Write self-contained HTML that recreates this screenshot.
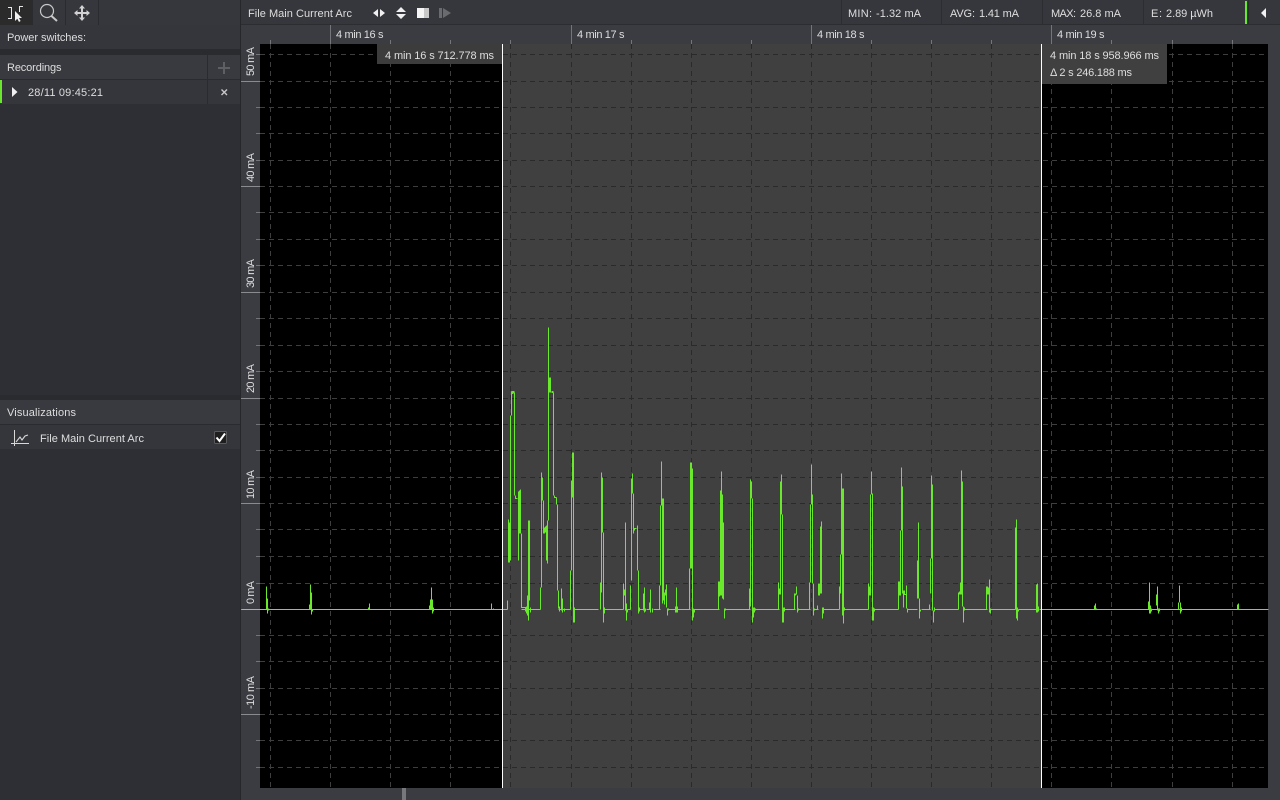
<!DOCTYPE html>
<html><head><meta charset="utf-8"><style>
html,body{margin:0;padding:0;background:#2e2f34;width:1280px;height:800px;overflow:hidden}
svg{display:block;position:absolute;left:0;top:0}
text{font-family:"Liberation Sans",sans-serif;font-size:11px;fill:#dedede}
</style></head><body>
<svg width="1280" height="800" viewBox="0 0 1280 800" xmlns="http://www.w3.org/2000/svg">
<defs>
<clipPath id="sel"><rect x="503" y="44" width="538" height="744"/></clipPath>
<clipPath id="l"><rect x="260" y="44" width="242" height="744"/></clipPath>
<clipPath id="r"><rect x="1042" y="44" width="226" height="744"/></clipPath>
<g id="grid" fill="none" stroke-dasharray="5 4" stroke-width="1" shape-rendering="crispEdges">
<path d="M270.5 44V788M330.5 44V788M390.5 44V788M450.5 44V788M510.5 44V788M571.5 44V788M631.5 44V788M691.5 44V788M751.5 44V788M811.5 44V788M871.5 44V788M931.5 44V788M991.5 44V788M1051.5 44V788M1111.5 44V788M1172.5 44V788M1232.5 44V788"/>
<path d="M260 54.5H1268M260 81.5H1268M260 107.5H1268M260 133.5H1268M260 160.5H1268M260 186.5H1268M260 212.5H1268M260 239.5H1268M260 265.5H1268M260 292.5H1268M260 318.5H1268M260 345.5H1268M260 371.5H1268M260 398.5H1268M260 424.5H1268M260 450.5H1268M260 477.5H1268M260 503.5H1268M260 529.5H1268M260 556.5H1268M260 583.5H1268M260 635.5H1268M260 661.5H1268M260 688.5H1268M260 714.5H1268M260 740.5H1268M260 767.5H1268"/>
</g>
</defs>

<!-- base panels -->
<rect x="0" y="0" width="1280" height="800" fill="#2e2f34"/>
<rect x="241" y="25" width="1039" height="775" fill="#3b3c42"/>
<rect x="240" y="0" width="1" height="800" fill="#26272a"/>

<!-- left toolbar -->
<rect x="0" y="0" width="240" height="25" fill="#36373c"/>
<rect x="0" y="0" width="32" height="25" fill="#2b2b2c"/>
<rect x="32" y="0" width="1" height="25" fill="#2a2b2e"/>
<rect x="65" y="0" width="1" height="25" fill="#2a2b2e"/>
<rect x="98" y="0" width="1" height="25" fill="#2a2b2e"/>
<path d="M8 7.5H11.5V18.5H8M23 6.5H19.5V12" fill="none" stroke="#e8e8e8" stroke-width="1"/>
<path d="M15 11V21L17.3 18.8L19 22L20.6 21L19 18H22Z" fill="#f0f0f0"/>
<circle cx="47" cy="11" r="6.5" fill="none" stroke="#c8c8c8" stroke-width="1.2"/>
<path d="M51.5 16L57 21" fill="none" stroke="#c8c8c8" stroke-width="2"/>
<path d="M82 5L85 8.5H83V12H86.5V10L90 13L86.5 16V14H83V17.5H85L82 21L79 17.5H81V14H77.5V16L74 13L77.5 10V12H81V8.5H79Z" fill="#d2d2d2"/>

<!-- power switches -->
<rect x="0" y="25" width="240" height="24" fill="#35363b"/>
<rect x="0" y="49" width="240" height="6" fill="#2a2b2e"/>
<text x="7" y="41" textLength="79" lengthAdjust="spacing">Power switches:</text>

<!-- recordings -->
<rect x="0" y="55" width="240" height="24" fill="#393a3f"/>
<rect x="0" y="79" width="240" height="1" fill="#2a2b2e"/>
<rect x="0" y="80" width="240" height="24" fill="#35363b"/>
<rect x="207" y="55" width="1" height="49" fill="#2a2b2e"/>
<rect x="0" y="80" width="2" height="23" fill="#6be62e"/>
<text x="7" y="71" textLength="54.5" lengthAdjust="spacing">Recordings</text>
<path d="M224 62V74M218 68H230" stroke="#5e5f63" stroke-width="2" fill="none"/>
<path d="M12 87L17.5 92L12 97Z" fill="#f0f0f0"/>
<text x="28" y="96" textLength="75" lengthAdjust="spacing">28/11 09:45:21</text>
<path d="M221.5 89.5L227 95M227 89.5L221.5 95" stroke="#c8c8c8" stroke-width="1.4" fill="none"/>

<!-- visualizations -->
<rect x="0" y="395" width="240" height="5" fill="#2a2b2e"/>
<rect x="0" y="400" width="240" height="24" fill="#393a3f"/>
<rect x="0" y="424" width="240" height="1" fill="#2a2b2e"/>
<rect x="0" y="425" width="240" height="24" fill="#35363b"/>
<text x="7" y="416" textLength="69" lengthAdjust="spacing">Visualizations</text>
<path d="M14.5 430V446M11 443.5H29" stroke="#d8d8d8" stroke-width="1" fill="none"/>
<path d="M16 442L20 437L22 440L25 436L28 435" stroke="#d8d8d8" stroke-width="1.1" fill="none"/>
<text x="40" y="442" textLength="104" lengthAdjust="spacing">File Main Current Arc</text>
<rect x="214.5" y="431.5" width="12" height="12" rx="1" fill="#1e1e1f" stroke="#5a5a5c"/>
<path d="M216.5 437.5L219.5 441L225 433.5" stroke="#fff" stroke-width="2" fill="none"/>

<!-- top bar -->
<rect x="241" y="0" width="1039" height="25" fill="#36373c"/>
<rect x="241" y="24" width="1039" height="1" fill="#2c2d30"/>
<text x="248" y="17" textLength="104" lengthAdjust="spacing">File Main Current Arc</text>
<path d="M378 9V17L373 13ZM380 9V17L385 13Z" fill="#f0f0f0"/>
<path d="M401 7L406 12H396ZM401 19L406 14H396Z" fill="#f0f0f0"/>
<rect x="417" y="8" width="7" height="10" fill="#f5f5f5"/><rect x="424" y="8" width="5" height="10" fill="#c8c8c8"/>
<rect x="439" y="8" width="3" height="10" fill="#6a6b6e"/><path d="M443 8L451 13L443 18Z" fill="#6a6b6e"/>

<rect x="841" y="0" width="1" height="25" fill="#2c2d30"/>
<rect x="941" y="0" width="1" height="25" fill="#2c2d30"/>
<rect x="1042" y="0" width="1" height="25" fill="#2c2d30"/>
<rect x="1143" y="0" width="1" height="25" fill="#2c2d30"/>
<rect x="1248" y="0" width="1" height="25" fill="#2c2d30"/>
<rect x="1245" y="1" width="2" height="23" fill="#6be62e"/>
<path d="M1266 8V18L1261 13Z" fill="#f0f0f0"/>
<text x="848" y="17" textLength="24" lengthAdjust="spacing">MIN:</text>
<text x="876" y="17" textLength="45" lengthAdjust="spacing">-1.32 mA</text>
<text x="950" y="17" textLength="25" lengthAdjust="spacing">AVG:</text>
<text x="979" y="17" textLength="40" lengthAdjust="spacing">1.41 mA</text>
<text x="1051" y="17" textLength="25" lengthAdjust="spacing">MAX:</text>
<text x="1080" y="17" textLength="41" lengthAdjust="spacing">26.8 mA</text>
<text x="1151" y="17" textLength="11" lengthAdjust="spacing">E:</text>
<text x="1166" y="17" textLength="47" lengthAdjust="spacing">2.89 µWh</text>

<!-- plot -->
<rect x="260" y="44" width="1008" height="744" fill="#000"/>
<rect x="503" y="44" width="538" height="744" fill="#404040"/>
<g stroke="#3e3e3e" clip-path="url(#l)"><use href="#grid"/></g>
<g stroke="#3e3e3e" clip-path="url(#r)"><use href="#grid"/></g>
<g stroke="#2a2a2a" clip-path="url(#sel)"><use href="#grid"/></g>

<!-- axis ticks -->
<path shape-rendering="crispEdges" stroke="#74757a" fill="none" d="M330.5 25V44M571.5 25V44M811.5 25V44M1051.5 25V44M270.5 40V44M390.5 40V44M450.5 40V44M510.5 40V44M631.5 40V44M691.5 40V44M751.5 40V44M871.5 40V44M931.5 40V44M991.5 40V44M1111.5 40V44M1172.5 40V44M1232.5 40V44"/>
<path shape-rendering="crispEdges" stroke="#8a8b8f" fill="none" d="M241 81.5H260M241 186.5H260M241 292.5H260M241 398.5H260M241 503.5H260M241 609.5H260M241 714.5H260"/>
<path shape-rendering="crispEdges" stroke="#74757a" fill="none" d="M256 54.5H260M256 107.5H260M256 133.5H260M256 160.5H260M256 212.5H260M256 239.5H260M256 265.5H260M256 318.5H260M256 345.5H260M256 371.5H260M256 424.5H260M256 450.5H260M256 477.5H260M256 529.5H260M256 556.5H260M256 583.5H260M256 635.5H260M256 661.5H260M256 688.5H260M256 740.5H260M256 767.5H260"/>
<text x="336" y="38" textLength="47.5" lengthAdjust="spacing">4 min 16 s</text>
<text x="577" y="38" textLength="47.5" lengthAdjust="spacing">4 min 17 s</text>
<text x="817" y="38" textLength="47.5" lengthAdjust="spacing">4 min 18 s</text>
<text x="1057" y="38" textLength="47.5" lengthAdjust="spacing">4 min 19 s</text>
<text transform="translate(254,76) rotate(-90)" textLength="29" lengthAdjust="spacing">50 mA</text>
<text transform="translate(254,182) rotate(-90)" textLength="29" lengthAdjust="spacing">40 mA</text>
<text transform="translate(254,288) rotate(-90)" textLength="29" lengthAdjust="spacing">30 mA</text>
<text transform="translate(254,393) rotate(-90)" textLength="29" lengthAdjust="spacing">20 mA</text>
<text transform="translate(254,499) rotate(-90)" textLength="29" lengthAdjust="spacing">10 mA</text>
<text transform="translate(254,604) rotate(-90)" textLength="23" lengthAdjust="spacing">0 mA</text>
<text transform="translate(254,709) rotate(-90)" textLength="33" lengthAdjust="spacing">-10 mA</text>

<!-- trace -->
<g transform="translate(0.5,0.5)" fill="none" stroke="#69e82c" stroke-width="1" shape-rendering="crispEdges">
<path d="M241 609H260M260 609H507M521 609H540M558 609H570M574 609H598M603 609H623M627 609H630M638 609H644M646 609H650M653 609H660M667 609H690M693 609H719M725 609H750M754 609H779M784 609H795M798 609H810M814 609H818M823 609H839M844 609H868M874 609H898M907 609H917M921 609H930M934 609H958M964 609H987M990 609H1015M1018 609H1036M1039 609H1268"/>
<path d="M266 586V609M267 598V613M268 608V610M309 604V609M310 584V609M311 592V614M312 609V611M368 607V609M369 603V609M429 605V609M430 599V609M431 587V609M432 599V613M433 607V611M491 603V609M493 608V609"/>
<path d="M507 609V600M508 519V562M509 522V562M510 415V560M511 391V415M511 391H514M511 392H514M511 393H513M514 392V495M515 495V498H517M518 491V560M519 490V533M520 489V533M521 533V607H525V611M526 606V613M527 595V615M528 520V620M529 520V600M530 607V612"/>
<path d="M540 609V587M541 472V587M542 477V500M543 500V533M544 527V533M545 526V532M546 525V560M547 520V563M548 327V520M549 377V392M550 377V392M551 391H553M551 392H553M553 392V495M554 495V497H556M556 497V504M557 504V590M558 590V608M559 606V611M561 588V610M562 598V612M564 608V611"/>
<path d="M570 609V570M571 480V570M572 452V497M573 452V497M573 493V622M574 607V622"/>
<path d="M600 609V582M601 472V592M602 477V532M603 532V622M604 607V613"/>
<path d="M623 609V583M624 589V595M625 522V610M626 603V620M627 609V612M630 585V609M631 478V580M632 473V493M633 493V533M634 530V528H636M637 525V570M638 570V613M639 607V611"/>
<path d="M643 593V610M644 587V612M645 608V611M649 602V609M650 589V612M652 608V612M659 585V609M660 505V585M661 461V505M662 498V603M663 498V600M664 592V604M665 589V595M666 584V607M667 608V615M668 608V610"/>
<path d="M675 606V612M676 587V612M677 606V612"/>
<path d="M689 568V609M690 462V568M691 462V568M692 468V620M693 608V617M694 609V612"/>
<path d="M718 581V609M719 581V596M720 490V595M721 471V595M722 494V598M723 522V599M724 608V618M725 608V610"/>
<path d="M749 588V609M750 479V606M751 481V498M752 498V622M753 607V617M754 607V612M755 608V610"/>
<path d="M778 582V609M779 588V594M780 481V594M781 474V514M782 514V622M783 607V622M784 607V611"/>
<path d="M794 593V609M795 593V595M796 586V594M797 595V612M798 608V610"/>
<path d="M809 582V609M810 504V582M811 464V504M812 494V583M813 583V615M814 608V610M817 605V609M818 583V595M819 583V595M820 526V593M821 521V593M822 607V618M823 607V613"/>
<path d="M839 586V609M840 554V593M841 473V554M842 488V615M843 488V623M844 607V610"/>
<path d="M868 583V609M869 586V595M870 494V595M871 471V494M872 493V620M873 607V620M874 608V611"/>
<path d="M898 581V609M899 581V595M900 530V595M901 467V530M902 486V593M903 590V607M904 590V594H906M906 585V608M907 608V612"/>
<path d="M917 560V598M918 522V598M919 598V618M920 609V611"/>
<path d="M929 604V609M930 558V593M931 475V558M932 484V610M933 610V622M934 607V611"/>
<path d="M958 592V609M959 591V594M960 582V594M961 470V594M962 481V606M963 606V622M964 607V610"/>
<path d="M986 586V609M987 586V594M988 587V594M989 579V612M990 608V613"/>
<path d="M1015 527V609M1016 519V618M1017 607V620M1018 609V611M1036 584V612M1037 583V612M1038 606V611"/>
<path d="M1094 605V609M1095 603V609M1096 608V609H1098M1148 601V609M1149 582V613M1150 605V613M1151 608V611M1156 594V605M1157 586V610M1158 608V613M1159 608V611M1178 602V609M1179 585V602M1180 602V613M1181 607V611M1237 604V609M1238 603V609"/>
</g>

<!-- tooltips -->
<rect x="377" y="44" width="125" height="20" fill="#3c3c3c"/>
<rect x="1042" y="44" width="125" height="40" fill="#404040"/>
<text x="385" y="59" textLength="109" lengthAdjust="spacing">4 min 16 s 712.778 ms</text>
<text x="1050" y="59" textLength="109" lengthAdjust="spacing">4 min 18 s 958.966 ms</text>
<text x="1050" y="76" textLength="82" lengthAdjust="spacing">Δ 2 s 246.188 ms</text>

<!-- cursors -->
<rect x="502" y="44" width="1" height="744" fill="#fff"/>
<rect x="1041" y="44" width="1" height="744" fill="#fff"/>

<!-- scrollbar handle -->
<rect x="402" y="788" width="4" height="12" fill="#77787c"/>
</svg>
</body></html>
